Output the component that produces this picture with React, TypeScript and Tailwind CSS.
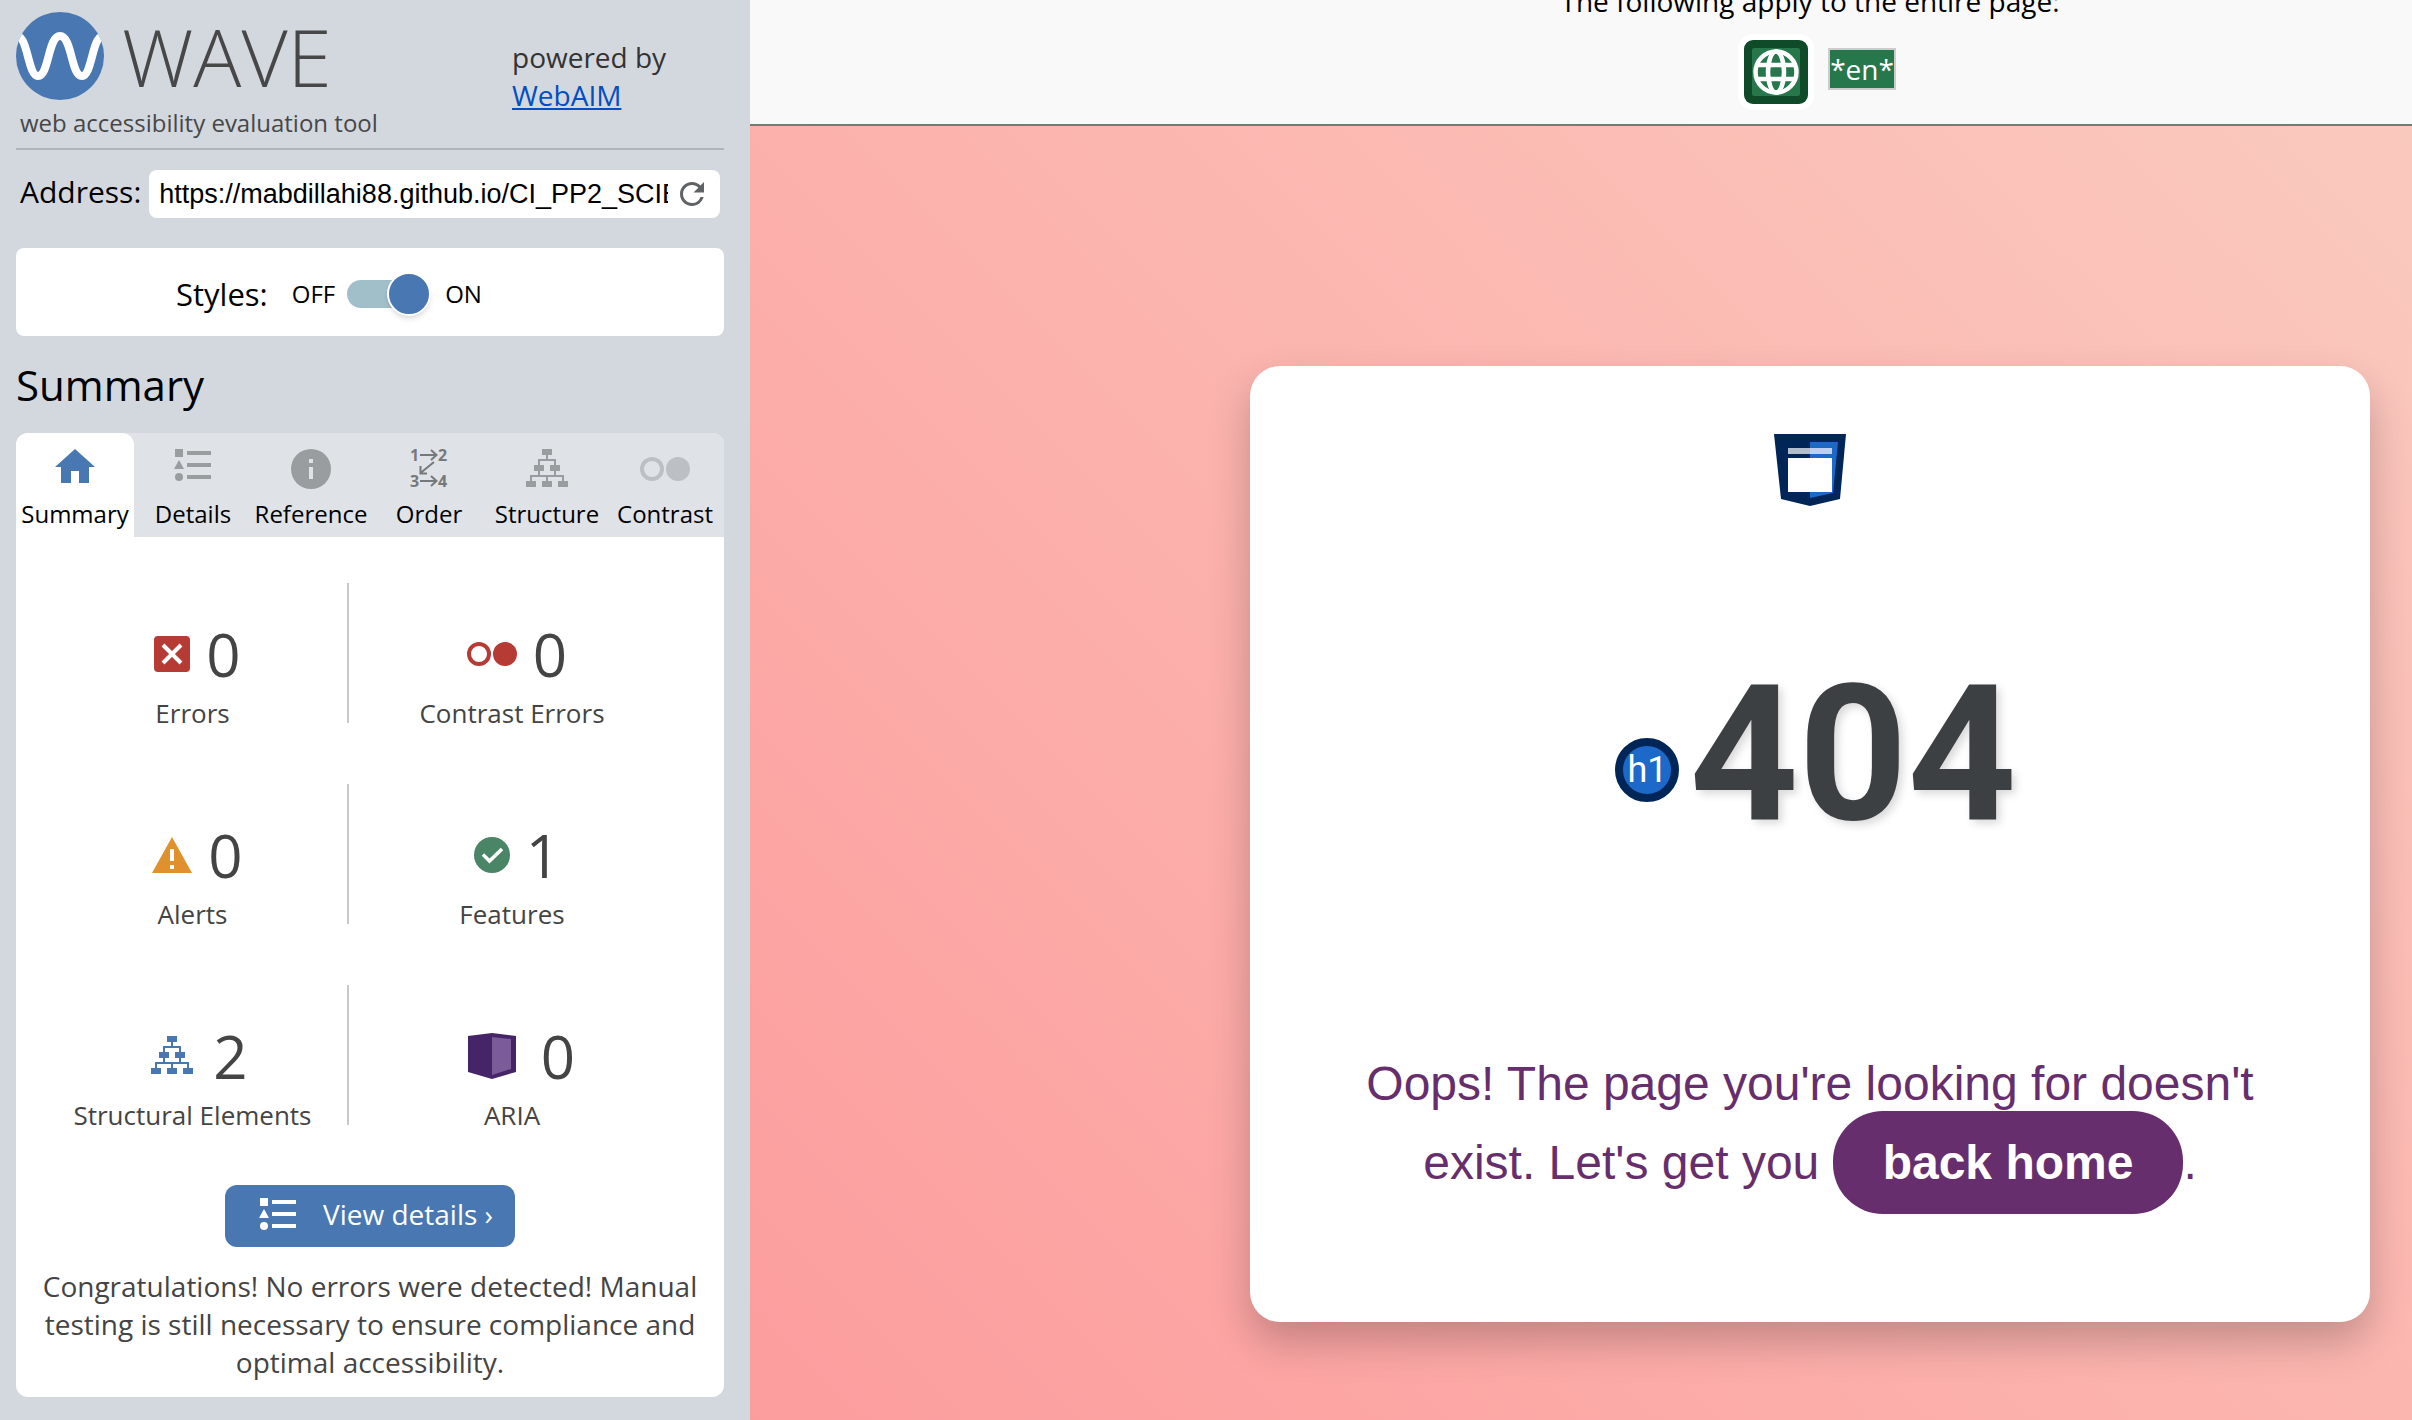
import { useState } from "react";
import type { ReactNode } from "react";
import { MdRefresh } from "react-icons/md";

function HomeIcon() {
  return (
    <svg className="h-10 w-[50px] text-[#4877b2]" viewBox="0 0 50 40" fill="currentColor" aria-hidden="true">
      <path d="M25 0L45 18H39V34H29V22H21V34H11V18H5Z" />
    </svg>
  );
}

function ListIcon({ className }: { className: string }) {
  return (
    <svg className={className} viewBox="0 0 50 40" fill="currentColor" aria-hidden="true">
      <path d="M7 0h8v8H7zM19 2h24v4H19zM19 14h24v4H19zM19 26h24v4H19zM11 11L16 20H6z" />
      <circle cx="11" cy="28" r="4" />
    </svg>
  );
}

function InfoIcon() {
  return (
    <svg className="h-10 w-[50px] text-[#999d9f]" viewBox="0 0 50 40" aria-hidden="true">
      <circle cx="25" cy="20" r="20" fill="currentColor" />
      <path d="M23 10h4v4h-4zM23 18h4v12h-4z" fill="#dfe2e7" />
    </svg>
  );
}

function OrderIcon() {
  return (
    <svg className="h-10 w-[50px] overflow-visible font-['Open_Sans',sans-serif] text-[#76797b]" viewBox="0 0 50 40" aria-hidden="true">
      <g fill="currentColor" fontSize="16" fontWeight="700">
        <text x="6" y="12">1</text>
        <text x="34" y="12">2</text>
        <text x="6" y="38">3</text>
        <text x="34" y="38">4</text>
      </g>
      <path
        d="M16 6H32M27 1L32.500 6L27 11M30 13L16.500 24M16.500 17V24.500H23M16 32H32M27 27L32.500 32L27 37"
        fill="none"
        stroke="currentColor"
        strokeWidth="2"
      />
    </svg>
  );
}

function TreeIcon({ className }: { className: string }) {
  return (
    <svg className={className} viewBox="0 0 50 40" fill="currentColor" aria-hidden="true">
      <path d="M20 0h10v6H20zM12 16h10v6H12zM28 16h10v6H28zM4 32h10v6H4zM20 32h10v6H20zM36 32h10v6H36z" />
      <path d="M25 6V11M17 17V11H33V17M17 22V27M33 22V27M9 33V27H41V33M25 27V33" fill="none" stroke="currentColor" strokeWidth="2" />
    </svg>
  );
}

function ContrastIcon({ className }: { className: string }) {
  return (
    <svg className={className} viewBox="0 0 50 40" aria-hidden="true">
      <circle cx="12" cy="20" r="10" fill="none" stroke="currentColor" strokeWidth="4" />
      <circle cx="38" cy="20" r="12" fill="currentColor" />
    </svg>
  );
}

function ErrorIcon() {
  return (
    <svg className="size-9" viewBox="0 0 36 36" aria-hidden="true">
      <rect width="36" height="36" rx="4" fill="#b63b35" />
      <path d="M9 9L27 27M27 9L9 27" stroke="#fff" strokeWidth="4" />
    </svg>
  );
}

function AlertIcon() {
  return (
    <svg className="h-9 w-10" viewBox="0 0 40 36" aria-hidden="true">
      <path d="M20 0L40 36H0Z" fill="#e0902d" />
      <path d="M18 12h4v12h-4zM18 28h4v4h-4z" fill="#fff" />
    </svg>
  );
}

function FeatureIcon() {
  return (
    <svg className="size-9" viewBox="0 0 36 36" aria-hidden="true">
      <circle cx="18" cy="18" r="18" fill="#4b8568" />
      <path d="M9 17.500L15.500 24L28 12" fill="none" stroke="#fff" strokeWidth="3.500" />
    </svg>
  );
}

function AriaIcon() {
  return (
    <svg className="h-12 w-[66px]" viewBox="-9 0 66 48" aria-hidden="true">
      <path d="M0 4L24 1L48 4V40L24 47L0 40Z" fill="#452567" />
      <path d="M24 5L43 7V37L24 43Z" fill="#7b5c99" />
    </svg>
  );
}

function LogoMark() {
  return (
    <svg className="size-[88px]" viewBox="0 0 88 88" aria-hidden="true">
      <defs>
        <clipPath id="logo-disc">
          <circle cx="44" cy="44" r="44" />
        </clipPath>
      </defs>
      <circle cx="44" cy="44" r="44" fill="#4877b2" />
      <path
        d="M-2 25C12 17 11 64 22 64C33 64 32 24 44 24C56 24 55 64 66 64C77 64 76 17 90 25"
        fill="none"
        stroke="#fff"
        strokeWidth="8"
        clipPath="url(#logo-disc)"
      />
    </svg>
  );
}

function LanguageIcon() {
  return (
    <svg className="size-[76px]" viewBox="0 0 76 76" role="img" aria-label="Language">
      <rect width="76" height="76" rx="15" fill="#fff" />
      <rect x="6" y="6" width="64" height="64" rx="9" fill="#0f4a29" />
      <rect x="14" y="14" width="48" height="48" rx="2" fill="#26774c" />
      <g fill="none" stroke="#fff" strokeWidth="4.500">
        <circle cx="38" cy="38" r="20.500" />
        <ellipse cx="38" cy="38" rx="8" ry="20.500" />
        <path d="M18 31H58M18 45H58" />
      </g>
    </svg>
  );
}

function NavigationIcon() {
  return (
    <svg className="size-[72px]" viewBox="0 0 72 72" role="img" aria-label="Structural element">
      <path d="M0 0H72L66 65L36 72L7 65Z" fill="#002557" />
      <path d="M36 8H64L59 59L36 64Z" fill="#1c69c9" />
      <path d="M14 14H58V20H14Z" fill="#fff" fillOpacity="0.7" />
      <path d="M14 24H58V58H14Z" fill="#fff" />
    </svg>
  );
}

const tabs: { label: string; icon: ReactNode }[] = [
  { label: "Summary", icon: <HomeIcon /> },
  { label: "Details", icon: <ListIcon className="h-10 w-[50px] text-[#999d9f]" /> },
  { label: "Reference", icon: <InfoIcon /> },
  { label: "Order", icon: <OrderIcon /> },
  { label: "Structure", icon: <TreeIcon className="h-10 w-[50px] text-[#999d9f]" /> },
  { label: "Contrast", icon: <ContrastIcon className="h-10 w-[50px] text-[#bcc0c4]" /> },
];

const counts: { label: string; count: number; icon: ReactNode }[] = [
  { label: "Errors", count: 0, icon: <ErrorIcon /> },
  { label: "Contrast Errors", count: 0, icon: <ContrastIcon className="h-10 w-[50px] text-[#b63b35]" /> },
  { label: "Alerts", count: 0, icon: <AlertIcon /> },
  { label: "Features", count: 1, icon: <FeatureIcon /> },
  { label: "Structural Elements", count: 2, icon: <TreeIcon className="h-10 w-[50px] text-[#4877b2]" /> },
  { label: "ARIA", count: 0, icon: <AriaIcon /> },
];

function Sidebar() {
  const [active, setActive] = useState("Summary");
  const [styles, setStyles] = useState(true);

  return (
    <aside className="w-[750px] shrink-0 bg-[#d3d8df] px-4 pr-[26px] font-['Open_Sans',sans-serif] text-black">
      <header className="flex h-[150px] border-b-2 border-[#b0b5ba] pt-3">
        <div className="w-[496px]">
          <div className="flex h-[88px] items-center gap-[18px]">
            <LogoMark />
            <h1 className="text-[80px] leading-[88px] font-light text-[#474747]">WAVE</h1>
          </div>
          <p className="pl-1 text-2xl leading-[46px] text-[#474747]">web accessibility evaluation tool</p>
        </div>
        <p className="pt-[26px] text-[28px] leading-[38px] text-[#333]">
          powered by
          <br />
          <a href="https://webaim.org" className="text-[#004fc4] underline">WebAIM</a>
        </p>
      </header>

      <form className="mt-5 flex h-12 items-center gap-2 pr-1 pl-1" onSubmit={(e) => e.preventDefault()}>
        <label htmlFor="address" className="pb-1.5 text-[30px]">Address:</label>
        <div className="flex h-12 min-w-0 flex-1 items-center rounded-lg bg-white pl-2.5">
          <input
            id="address"
            type="text"
            defaultValue="https://mabdillahi88.github.io/CI_PP2_SCIENCE/404.html"
            className="h-12 min-w-0 flex-1 bg-transparent font-['Liberation_Sans',sans-serif] text-[27px] outline-none"
          />
          <button type="submit" aria-label="Reload" className="mr-2.5 ml-1.5 text-[#5f6366]">
            <MdRefresh className="size-9" />
          </button>
        </div>
      </form>

      <section className="mt-[30px] flex h-[88px] items-center rounded-lg bg-white pt-1 pl-40">
        <span className="text-[31px]">Styles:</span>
        <label className="ml-6 flex items-center text-2xl">
          <span>OFF</span>
          <input
            type="checkbox"
            role="switch"
            aria-label="Styles"
            checked={styles}
            onChange={(e) => setStyles(e.target.checked)}
            className="peer sr-only"
          />
          <span className="mx-3 flex h-7 w-[84px] items-center rounded-full bg-linear-to-r from-[#a1bfc9] from-75% to-transparent to-75% peer-checked:justify-end">
            <span className="size-11 rounded-full border-2 border-white bg-[#4877b2] shadow-md" />
          </span>
          <span className="ml-0.5">ON</span>
        </label>
      </section>

      <h2 className="mt-5 h-[77px] text-[42px] leading-[58px]">Summary</h2>

      <section className="rounded-xl bg-white">
        <nav className="grid grid-cols-6 rounded-t-xl bg-[#dfe2e7]" role="tablist">
          {tabs.map((tab) => (
            <button
              key={tab.label}
              type="button"
              role="tab"
              aria-selected={active === tab.label}
              onClick={() => setActive(tab.label)}
              className={
                active === tab.label
                  ? "flex h-[104px] flex-col items-center rounded-t-xl bg-white pt-4 text-2xl"
                  : "flex h-[104px] flex-col items-center rounded-t-xl pt-4 text-2xl"
              }
            >
              {tab.icon}
              <span className="mt-[7px] leading-9">{tab.label}</span>
            </button>
          ))}
        </nav>

        <ul className="grid grid-cols-2 gap-y-[61px] pt-[46px] pr-[52px] pl-4">
          {counts.map((item, i) => (
            <li
              key={item.label}
              className={
                i % 2 === 0
                  ? "mr-[3px] flex h-[140px] flex-col items-center border-r-2 border-[#c8c8c8] pl-1.5"
                  : "flex h-[140px] flex-col items-center"
              }
            >
              <div className="mt-[39px] flex h-16 items-center gap-4 pl-2.5">
                {item.icon}
                <span className="text-[60px] leading-[64px] text-[#444]">{item.count}</span>
              </div>
              <span className="mt-[9px] text-[26px] leading-9 text-[#444]">{item.label}</span>
            </li>
          ))}
        </ul>

        <div className="flex justify-center pt-[60px]">
          <button type="button" className="flex h-[62px] items-center rounded-xl bg-[#4877b2] pr-[22px] pb-1 pl-7 text-[28px] text-white">
            <ListIcon className="mt-2 h-10 w-[50px]" />
            <span className="ml-5">View details ›</span>
          </button>
        </div>

        <p className="px-5 pt-5 pb-4 text-center text-[28px] leading-[38px] text-[#444]">
          Congratulations! No errors were detected! Manual testing is still necessary to ensure compliance and optimal
          accessibility.
        </p>
      </section>
    </aside>
  );
}

function EvaluatedPage() {
  return (
    <main className="min-w-0 flex-1 overflow-hidden">
      <div className="w-[2120px]">
        <header className="flex h-[126px] flex-col items-center justify-end border-b-2 border-[#747c71] bg-[#f9f9f9] pb-3.5 font-['Open_Sans',sans-serif] text-[28px] text-black">
          <p className="leading-[38px]">The following apply to the entire page:</p>
          <div className="mt-3.5 flex items-center gap-3.5 pl-3.5">
            <LanguageIcon />
            <span className="mb-1.5 border-2 border-[#ccc] bg-[#26774c] leading-[38px] text-white">*en*</span>
          </div>
        </header>

        <div className="flex h-[1436px] items-center justify-center bg-linear-45 from-[#fc9a9c] to-[#f9d0c3] font-['Liberation_Sans',sans-serif]">
          <section className="flex w-[1120px] flex-col items-center rounded-[30px] bg-white px-24 pt-[68px] pb-[120px] shadow-[0_20px_40px_rgba(0,0,0,0.22)]">
            <NavigationIcon />
            <div className="mt-32 flex h-60 items-center gap-2.5 pl-3">
              <span className="mt-8 flex size-16 items-center justify-center rounded-full border-8 border-[#002557] bg-[#1c69c9] font-[Roboto,sans-serif] text-4xl leading-none text-white">
                h1
              </span>
              <h1 className="font-[Roboto,sans-serif] text-[190px] leading-[240px] font-bold text-[#3c4043] [text-shadow:4px_4px_8px_rgba(0,0,0,0.15)]">404</h1>
            </div>
            <p className="mt-[170px] text-center text-[48px] leading-[79px] text-[#672e6d]">
              Oops! The page you're looking for doesn't exist. Let's get you{" "}
              <a href="#home" className="rounded-[50px] bg-[#672e6d] px-[50px] py-[25px] font-bold text-white">back home</a>.
            </p>
          </section>
        </div>
      </div>
    </main>
  );
}

export default function App() {
  return (
    <div className="flex h-screen overflow-hidden">
      <Sidebar />
      <EvaluatedPage />
    </div>
  );
}
